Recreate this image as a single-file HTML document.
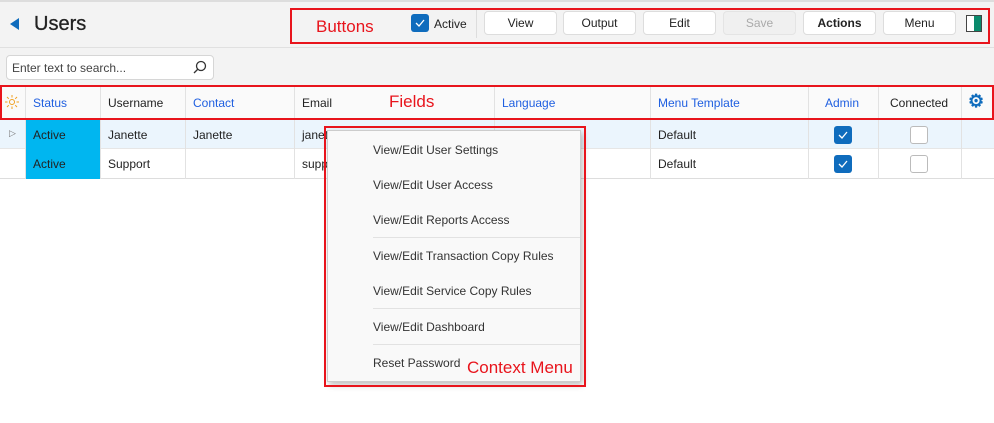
<!DOCTYPE html>
<html><head><style>
*{box-sizing:border-box;margin:0;padding:0}
body{width:994px;height:423px;background:#fff;font-family:"Liberation Sans",sans-serif;font-size:12px;color:#222;position:relative;overflow:hidden}
.a{position:absolute}
.top{left:0;top:0;width:994px;height:48px;background:#f3f3f3;border-top:2px solid #ddd;border-bottom:1px solid #e0e0e0}
.band{left:0;top:48px;width:994px;height:38px;background:#f3f3f3}
.btn{top:11px;height:24px;width:73px;background:#fff;border:1px solid #ddd;border-radius:4px;text-align:center;line-height:22px;font-size:12px;color:#222}
.red{border:2px solid #e8141c}
.hdr{left:0;top:86px;width:994px;height:33px;background:#fafafa;border-bottom:1px solid #ddd}
.col{top:86px;height:93px;border-left:1px solid #e2e2e2}
.ht{top:96px;font-size:12px}
.blue{color:#1f5fe0}
.r1{left:0;top:119px;width:994px;height:30px;background:#ebf5fd;border-bottom:1px solid #e6e6e6}
.r2{left:0;top:149px;width:994px;height:30px;background:#fff;border-bottom:1px solid #ddd}
.cb{width:18px;height:18px;border-radius:3px}
.on{background:#0f6cbd}
.off{background:#fff;border:1px solid #bbb}
.mi{left:373px;font-size:12px;color:#333}
.sep{left:373px;width:207px;height:1px;background:#e2e2e2}
</style></head><body>
<div class="a top"></div>
<div class="a band"></div>
<svg class="a" style="left:10px;top:18px" width="10" height="12"><path d="M9 0V12L0 6Z" fill="#0f6cbd"/></svg>
<div class="a" style="left:34px;top:13px;font-size:20px;color:#222;font-weight:500;-webkit-text-stroke:0.3px #222">Users</div>
<div class="a red" style="left:290px;top:8px;width:700px;height:36px"></div>
<div class="a" style="left:316px;top:17px;font-size:17px;color:#e8141c">Buttons</div>
<div class="a cb on" style="left:411px;top:14px"><svg width="18" height="18"><path d="M5 9l3 3 5-6" stroke="#fff" stroke-width="1.3" fill="none"/></svg></div>
<div class="a" style="left:434px;top:17px">Active</div>
<div class="a" style="left:476px;top:10px;width:1px;height:28px;background:#ddd"></div>
<div class="a btn" style="left:484px">View</div>
<div class="a btn" style="left:563px">Output</div>
<div class="a btn" style="left:643px">Edit</div>
<div class="a btn" style="left:723px;background:#f0f0f0;color:#aaa;border-color:#e4e4e4">Save</div>
<div class="a btn" style="left:803px;font-weight:bold">Actions</div>
<div class="a btn" style="left:883px">Menu</div>
<div class="a" style="left:966px;top:15px;width:16px;height:17px;border:1.5px solid #444;background:linear-gradient(90deg,#fff 50%,#0a8a6c 50%)"></div>
<div class="a" style="left:6px;top:55px;width:208px;height:25px;background:#fff;border:1px solid #d6d6d6;border-radius:4px"></div>
<div class="a" style="left:12px;top:61px;color:#444">Enter text to search...</div>
<svg class="a" style="left:193px;top:60px" width="14" height="14"><circle cx="8" cy="6" r="4.5" stroke="#333" stroke-width="1.3" fill="none"/><path d="M5 9L1 13" stroke="#333" stroke-width="1.3"/></svg>
<div class="a hdr"></div>
<div class="a r1"></div><div class="a r2"></div>
<div class="a" style="left:26px;top:119px;width:74px;height:60px;background:#00b6f0"></div>
<div class="a col" style="left:25px"></div><div class="a col" style="left:100px"></div><div class="a col" style="left:185px"></div><div class="a col" style="left:294px"></div><div class="a col" style="left:494px"></div><div class="a col" style="left:650px"></div><div class="a col" style="left:808px"></div><div class="a col" style="left:878px"></div><div class="a col" style="left:961px"></div>
<svg class="a" style="left:5px;top:95px" width="14" height="14"><circle cx="7" cy="7" r="2.5" stroke="#f0a020" fill="none"/><path d="M7 0v2.5M7 11.5V14M0 7h2.5M11.5 7H14M2 2l1.8 1.8M10.2 10.2L12 12M2 12l1.8-1.8M10.2 3.8L12 2" stroke="#f0a020"/></svg>
<div class="a ht blue" style="left:33px">Status</div>
<div class="a ht" style="left:108px">Username</div>
<div class="a ht blue" style="left:193px">Contact</div>
<div class="a ht" style="left:302px">Email</div>
<div class="a ht blue" style="left:502px">Language</div>
<div class="a ht blue" style="left:658px">Menu Template</div>
<div class="a ht blue" style="left:825px">Admin</div>
<div class="a ht" style="left:890px">Connected</div>
<div class="a" style="left:968px;top:91px;color:#0f6cbd;font-size:18px;font-weight:bold">⚙</div>
<div class="a red" style="left:0;top:85px;width:994px;height:35px"></div>
<div class="a" style="left:389px;top:92px;font-size:17px;color:#e8141c">Fields</div>
<div class="a" style="left:9px;top:128px;color:#777;font-size:9px">▷</div>
<div class="a" style="left:33px;top:128px">Active</div><div class="a" style="left:108px;top:128px">Janette</div><div class="a" style="left:193px;top:128px">Janette</div><div class="a" style="left:302px;top:128px">janet</div><div class="a" style="left:658px;top:128px">Default</div>
<div class="a" style="left:33px;top:157px">Active</div><div class="a" style="left:108px;top:157px">Support</div><div class="a" style="left:302px;top:157px">supp</div><div class="a" style="left:658px;top:157px">Default</div>
<div class="a cb on" style="left:834px;top:126px"><svg width="18" height="18"><path d="M5 9l3 3 5-6" stroke="#fff" stroke-width="1.3" fill="none"/></svg></div>
<div class="a cb off" style="left:910px;top:126px"></div>
<div class="a cb on" style="left:834px;top:155px"><svg width="18" height="18"><path d="M5 9l3 3 5-6" stroke="#fff" stroke-width="1.3" fill="none"/></svg></div>
<div class="a cb off" style="left:910px;top:155px"></div>
<div class="a" style="left:327px;top:130px;width:254px;height:252px;background:#f9f9f9;border:1px solid #ccc;box-shadow:2px 3px 6px rgba(0,0,0,.25)"></div>
<div class="a mi" style="top:143px">View/Edit User Settings</div>
<div class="a mi" style="top:178px">View/Edit User Access</div>
<div class="a mi" style="top:213px">View/Edit Reports Access</div>
<div class="a sep" style="top:237px"></div>
<div class="a mi" style="top:249px">View/Edit Transaction Copy Rules</div>
<div class="a mi" style="top:284px">View/Edit Service Copy Rules</div>
<div class="a sep" style="top:308px"></div>
<div class="a mi" style="top:320px">View/Edit Dashboard</div>
<div class="a sep" style="top:344px"></div>
<div class="a mi" style="top:356px">Reset Password</div>
<div class="a red" style="left:324px;top:126px;width:262px;height:261px"></div>
<div class="a" style="left:467px;top:358px;font-size:17px;color:#e8141c">Context Menu</div>
</body></html>
